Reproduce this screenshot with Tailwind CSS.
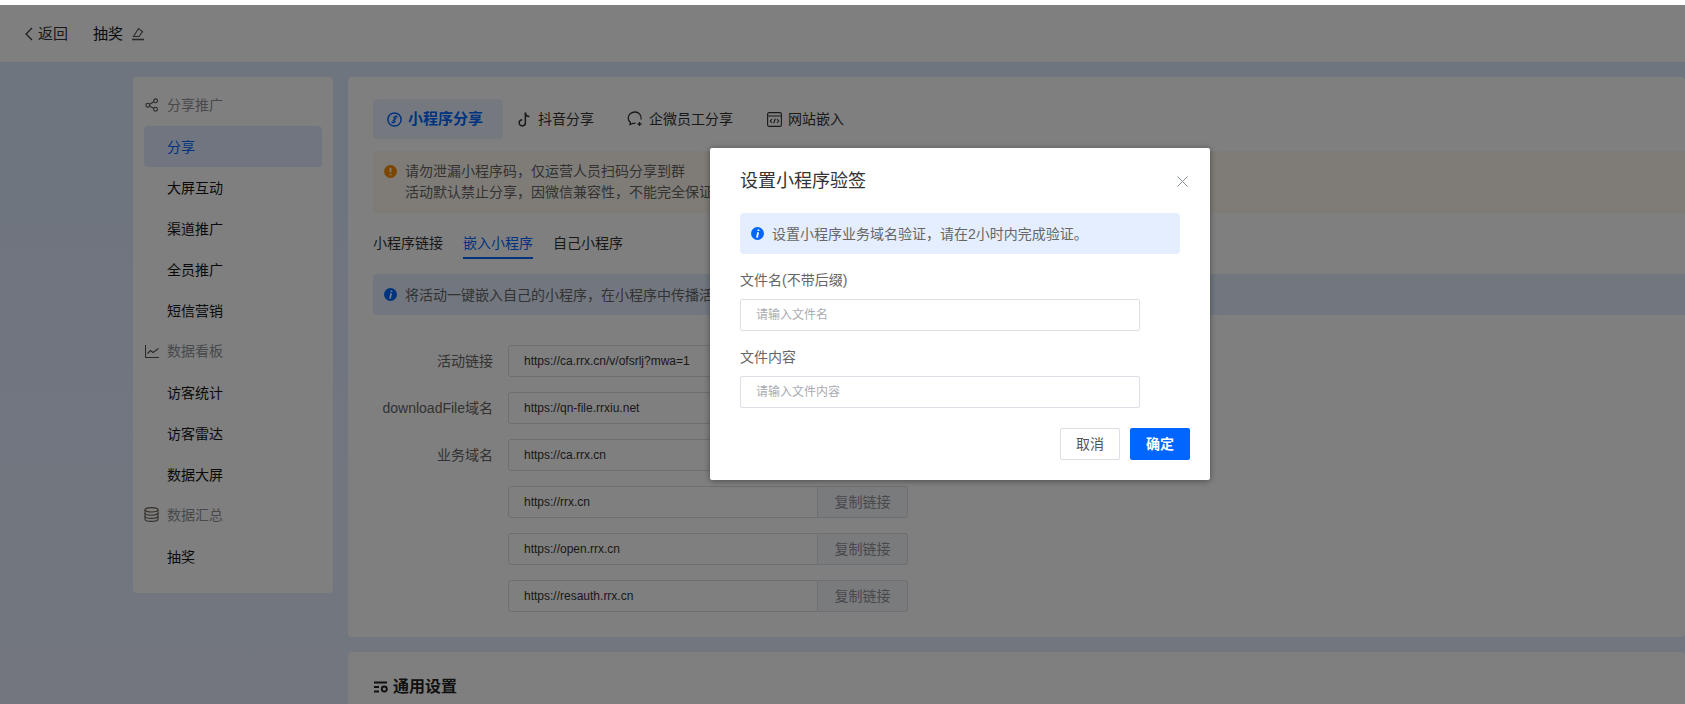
<!DOCTYPE html>
<html lang="zh-CN">
<head>
    <meta charset="UTF-8">
    <title>设置小程序验签</title>
    <script src="https://cdn.jsdelivr.net/npm/@tailwindcss/browser@4"></script>
</head>
<body class="relative h-[704px] overflow-hidden bg-white font-['Liberation_Sans','Noto_Sans_CJK_SC',sans-serif] text-sm text-[#141414]">

    <!-- Page -->
    <div class="mt-[5px] h-[699px] overflow-hidden bg-linear-to-b from-[#dceaff] to-[#e6edff]">
        <!-- Header -->
        <header class="flex h-[57px] items-center bg-white pt-[1px] text-[15px]">
            <svg class="ml-[24px] h-[14px] w-[9px] text-[#333]" viewBox="0 0 9 14" fill="none" stroke="currentColor" stroke-width="1.2"><path d="M8 1 2 7l6 6"/></svg>
            <span class="ml-[5px] text-[#333]">返回</span>
            <span class="ml-[25px]">抽奖</span>
            <svg class="ml-[8px] h-[14px] w-[14px] text-[#555]" viewBox="0 0 14 14" fill="none" stroke="currentColor" stroke-width="1.1"><path d="M2.500 9.500 7.500 1.500l4 3-3.500 5z"/><path d="M1 12.500h12" stroke-width="1.600"/></svg>
        </header>

        <div class="flex items-start pl-[133px] pt-[15px]">
            <!-- Sidebar -->
            <aside class="h-[516px] w-[200px] shrink-0 rounded-[4px] bg-white px-[11px] pt-[8px]">
                <div class="flex h-[41px] items-center pb-[2px] text-[#909399]">
                    <svg class="ml-[1px] h-[14px] w-[14px]" viewBox="0 0 14 14" fill="none" stroke="#555" stroke-width="1.100"><circle cx="2.800" cy="7.200" r="1.900"/><circle cx="10.600" cy="2.800" r="1.900"/><circle cx="10.600" cy="11.200" r="1.900"/><path d="M4.500 6.200 8.900 3.800M4.500 8.200l4.400 2.100"/></svg>
                    <span class="ml-[8px]">分享推广</span>
                </div>
                <div class="flex h-[41px] items-center rounded-[4px] bg-[#e0eafe] pl-[23px] text-[#0066ff]">分享</div>
                <div class="flex h-[41px] items-center pl-[23px]">大屏互动</div>
                <div class="flex h-[41px] items-center pl-[23px]">渠道推广</div>
                <div class="flex h-[41px] items-center pl-[23px]">全员推广</div>
                <div class="flex h-[41px] items-center pl-[23px]">短信营销</div>
                <div class="flex h-[41px] items-center pb-[2px] text-[#909399]">
                    <svg class="ml-[1px] h-[14px] w-[14px]" viewBox="0 0 14 14" fill="none" stroke="#555" stroke-width="1.100"><path d="M.5 1v12.500H14"/><path d="M2.500 9.500 5.500 6.500 8 8.500 13.500 4.500"/></svg>
                    <span class="ml-[8px]">数据看板</span>
                </div>
                <div class="flex h-[41px] items-center pl-[23px]">访客统计</div>
                <div class="flex h-[41px] items-center pl-[23px]">访客雷达</div>
                <div class="flex h-[41px] items-center pl-[23px]">数据大屏</div>
                <div class="flex h-[41px] items-center pb-[2px] text-[#909399]">
                    <svg class="h-[15px] w-[15px]" viewBox="0 0 15 15" fill="none" stroke="#6b5f55" stroke-width="1.100"><ellipse cx="7.500" cy="2.800" rx="6.500" ry="2.200"/><path d="M1 2.800v9.400c0 1.200 2.900 2.200 6.500 2.200s6.500-1 6.500-2.200V2.800"/><path d="M1 6c0 1.200 2.900 2.200 6.500 2.200S14 7.200 14 6M1 9.200c0 1.200 2.900 2.200 6.500 2.200s6.500-1 6.500-2.200"/></svg>
                    <span class="ml-[8px]">数据汇总</span>
                </div>
                <div class="flex h-[41px] items-center pl-[23px]">抽奖</div>
            </aside>

            <!-- Main -->
            <main class="ml-[15px] min-w-0 flex-1">
                <section class="h-[560px] rounded-[4px] bg-white pl-[25px] pt-[22px]">
                    <!-- Tabs -->
                    <div class="flex h-[40px] items-center text-[#333]">
                        <div class="flex h-[40px] w-[130px] items-center rounded-[4px] bg-[#ebf3ff] pl-[14px] text-[15px] font-bold text-[#0066ff]">
                            <svg class="h-[15px] w-[15px]" viewBox="0 0 15 15" fill="none" stroke="currentColor" stroke-width="1.500"><circle cx="7.500" cy="7.500" r="6.600"/><path d="M10 4.800a1.500 1.500 0 0 0-2.100 0L6.900 5.800M5 10.200a1.500 1.500 0 0 0 2.100 0l1-1M6.200 8.800l2.600-2.600" stroke-linecap="round"/></svg>
                            <span class="ml-[6px]">小程序分享</span>
                        </div>
                        <svg class="ml-[15px] h-[15px] w-[13px]" viewBox="0 0 12 14" fill="none" stroke="currentColor" stroke-width="1.400"><path d="M6.800 .5v9.600a2.900 2.900 0 1 1-2.900-2.900"/><path d="M6.800 .8c.2 2 1.800 3.300 3.800 3.400"/></svg>
                        <span class="ml-[7px]">抖音分享</span>
                        <svg class="ml-[33px] h-[16px] w-[16px]" viewBox="0 0 16 16" fill="none" stroke="currentColor" stroke-width="1.300"><path d="M14 8.500C14.800 4 11.800 1 8 1S1.200 3.700 1.200 7c0 2 .9 3.500 2.200 4.500l-.4 2 3-1.200h2.500"/><path d="M10.500 13h4M12.500 11v4"/></svg>
                        <span class="ml-[6px]">企微员工分享</span>
                        <svg class="ml-[34px] h-[15px] w-[15px]" viewBox="0 0 15 15" fill="none" stroke="currentColor" stroke-width="1.100"><rect x=".6" y=".6" width="13.800" height="13.800" rx="1.500"/><path d="M.6 4h13.800M5 7 3.300 9 5 11M10 7l1.700 2L10 11M8.300 6.800 6.700 11.200"/></svg>
                        <span class="ml-[6px]">网站嵌入</span>
                    </div>

                    <!-- Warning -->
                    <div class="mt-[12px] flex h-[62px] items-start rounded-l-[4px] bg-[#fef9ef] pl-[11px] pt-[10px] leading-[21px] text-[#666]">
                        <svg class="mt-[4px] h-[13px] w-[13px] shrink-0" viewBox="0 0 12 12"><circle cx="6" cy="6" r="6" fill="#fa8c00"/><path d="M6 2.500v4.200M6 8.200v1.300" stroke="#fff" stroke-width="1.600"/></svg>
                        <div class="ml-[8px]">
                            <p>请勿泄漏小程序码，仅运营人员扫码分享到群</p>
                            <p>活动默认禁止分享，因微信兼容性，不能完全保证</p>
                        </div>
                    </div>

                    <!-- Sub tabs -->
                    <div class="mt-[20px] flex h-[26px] gap-[20px] text-[#333]">
                        <span class="h-[26px] leading-[21px]">小程序链接</span>
                        <span class="h-[26px] border-b-2 border-[#0066ff] leading-[21px] text-[#0066ff]">嵌入小程序</span>
                        <span class="h-[26px] leading-[21px]">自己小程序</span>
                    </div>

                    <!-- Info -->
                    <div class="mt-[15px] flex h-[41px] items-center rounded-l-[4px] bg-[#e5eeff] pl-[11px] text-[#666]">
                        <svg class="h-[13px] w-[13px] shrink-0" viewBox="0 0 12 12"><circle cx="6" cy="6" r="6" fill="#0066ff"/><path d="M6.900 2.200v1.400M6.600 4.800 5.500 9.800" stroke="#fff" stroke-width="1.600"/></svg>
                        <span class="ml-[8px]">将活动一键嵌入自己的小程序，在小程序中传播活动</span>
                    </div>

                    <!-- Form -->
                    <div class="mt-[30px] flex flex-col gap-[15px] text-[12px] text-[#333]">
                        <div class="flex h-[32px] items-center">
                            <label class="mr-[15px] w-[120px] text-right text-sm text-[#666]">活动链接</label>
                            <input class="h-[32px] w-[310px] rounded-l-[3px] border border-[#dcdfe6] pl-[15px]" value="https://ca.rrx.cn/v/ofsrlj?mwa=1">
                            <span class="flex h-[32px] w-[90px] items-center justify-center rounded-r-[3px] border border-l-0 border-[#dcdfe6] bg-[#f5f7fa] text-sm text-[#909399]">复制链接</span>
                        </div>
                        <div class="flex h-[32px] items-center">
                            <label class="mr-[15px] w-[120px] text-right text-sm text-[#666]">downloadFile域名</label>
                            <input class="h-[32px] w-[310px] rounded-l-[3px] border border-[#dcdfe6] pl-[15px]" value="https://qn-file.rrxiu.net">
                            <span class="flex h-[32px] w-[90px] items-center justify-center rounded-r-[3px] border border-l-0 border-[#dcdfe6] bg-[#f5f7fa] text-sm text-[#909399]">复制链接</span>
                        </div>
                        <div class="flex h-[32px] items-center">
                            <label class="mr-[15px] w-[120px] text-right text-sm text-[#666]">业务域名</label>
                            <input class="h-[32px] w-[310px] rounded-l-[3px] border border-[#dcdfe6] pl-[15px]" value="https://ca.rrx.cn">
                            <span class="flex h-[32px] w-[90px] items-center justify-center rounded-r-[3px] border border-l-0 border-[#dcdfe6] bg-[#f5f7fa] text-sm text-[#909399]">复制链接</span>
                        </div>
                        <div class="flex h-[32px] items-center pl-[135px]">
                            <input class="h-[32px] w-[310px] rounded-l-[3px] border border-[#dcdfe6] pl-[15px]" value="https://rrx.cn">
                            <span class="flex h-[32px] w-[90px] items-center justify-center rounded-r-[3px] border border-l-0 border-[#dcdfe6] bg-[#f5f7fa] text-sm text-[#909399]">复制链接</span>
                        </div>
                        <div class="flex h-[32px] items-center pl-[135px]">
                            <input class="h-[32px] w-[310px] rounded-l-[3px] border border-[#dcdfe6] pl-[15px]" value="https://open.rrx.cn">
                            <span class="flex h-[32px] w-[90px] items-center justify-center rounded-r-[3px] border border-l-0 border-[#dcdfe6] bg-[#f5f7fa] text-sm text-[#909399]">复制链接</span>
                        </div>
                        <div class="flex h-[32px] items-center pl-[135px]">
                            <input class="h-[32px] w-[310px] rounded-l-[3px] border border-[#dcdfe6] pl-[15px]" value="https://resauth.rrx.cn">
                            <span class="flex h-[32px] w-[90px] items-center justify-center rounded-r-[3px] border border-l-0 border-[#dcdfe6] bg-[#f5f7fa] text-sm text-[#909399]">复制链接</span>
                        </div>
                    </div>
                </section>

                <!-- General settings -->
                <section class="mt-[15px] h-[120px] rounded-[4px] bg-white pl-[26px] pt-[24px]">
                    <div class="flex h-[22px] items-center text-base font-bold text-[#222]">
                        <svg class="h-[12px] w-[14px]" viewBox="0 0 14 12" fill="none" stroke="currentColor" stroke-width="1.900"><path d="M0 1.500h13M0 6h5M0 10.500h5"/><circle cx="10.300" cy="8" r="2.500"/></svg>
                        <span class="ml-[5px]">通用设置</span>
                    </div>
                </section>
            </main>
        </div>
    </div>

    <!-- Mask -->
    <div class="absolute inset-x-0 bottom-0 top-[5px] bg-black/50"></div>

    <!-- Modal -->
    <div class="absolute left-[710px] top-[148px] h-[332px] w-[500px] rounded-[2px] bg-white pl-[30px] pt-[20px] shadow-[0_1px_6px_rgba(0,0,0,0.4)]">
        <div class="flex h-[26px] items-center justify-between pr-[22px]">
            <h3 class="text-lg text-[#333]">设置小程序验签</h3>
            <svg class="h-[11px] w-[11px] text-[#8a9099]" viewBox="0 0 11 11" fill="none" stroke="currentColor" stroke-width="1"><path d="M.5.500l10 10M10.500.500l-10 10"/></svg>
        </div>
        <div class="mt-[19px] flex h-[41px] w-[440px] items-center rounded-[4px] bg-[#e5eeff] pl-[11px] text-[#666]">
            <svg class="h-[13px] w-[13px] shrink-0" viewBox="0 0 12 12"><circle cx="6" cy="6" r="6" fill="#0066ff"/><path d="M6.900 2.200v1.400M6.600 4.800 5.500 9.800" stroke="#fff" stroke-width="1.600"/></svg>
            <span class="ml-[8px]">设置小程序业务域名验证，请在2小时内完成验证。</span>
        </div>
        <label class="mt-[16px] block h-[21px] leading-[21px] text-[#666]">文件名(不带后缀)</label>
        <input class="mt-[8px] block h-[32px] w-[400px] rounded-[2px] border border-[#dcdfe6] pl-[15px] text-[12px] placeholder:text-[#a8abb2]" placeholder="请输入文件名">
        <label class="mt-[16px] block h-[21px] leading-[21px] text-[#666]">文件内容</label>
        <input class="mt-[8px] block h-[32px] w-[400px] rounded-[2px] border border-[#dcdfe6] pl-[15px] text-[12px] placeholder:text-[#a8abb2]" placeholder="请输入文件内容">
        <div class="mt-[20px] flex w-[450px] justify-end gap-[10px]">
            <button class="h-[32px] w-[60px] rounded-[2px] border border-[#dcdfe6] bg-white text-[#555]">取消</button>
            <button class="h-[32px] w-[60px] rounded-[2px] bg-[#0066ff] font-bold text-white">确定</button>
        </div>
    </div>
</body>
</html>
